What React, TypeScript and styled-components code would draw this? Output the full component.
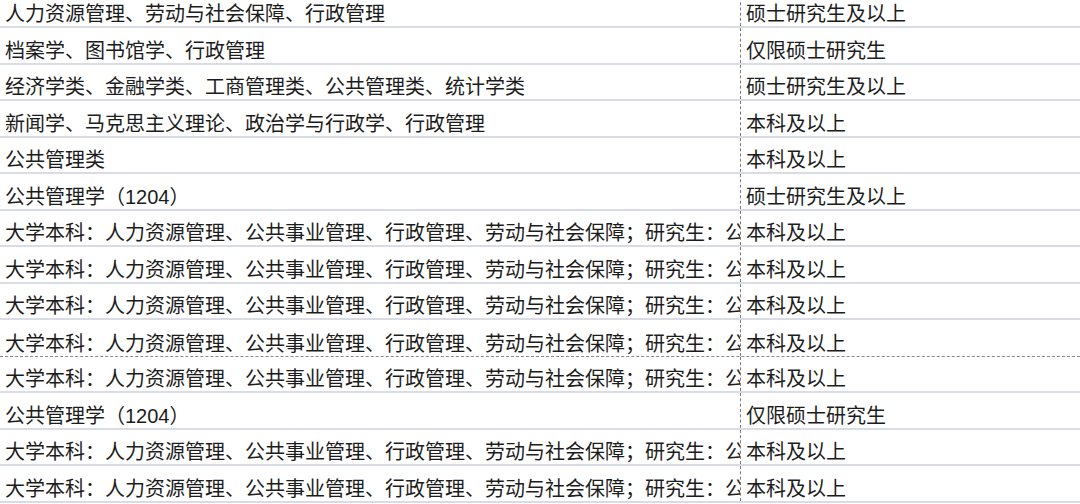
import styled, { createGlobalStyle } from 'styled-components';

const GlobalStyle = createGlobalStyle`
    html, body {
        margin: 0;
        padding: 0;
        background: #ffffff;
        overflow: hidden;
    }
`;

type Entry = {
    major: string;
    degree: string;
    pageBreak?: boolean;
};

// the long cells run past the column edge and get clipped, same as the sheet
const LONG_MAJOR =
    '大学本科：人力资源管理、公共事业管理、行政管理、劳动与社会保障；研究生：公共管理';

const entries: Entry[] = [
    { major: '人力资源管理、劳动与社会保障、行政管理', degree: '硕士研究生及以上' },
    { major: '档案学、图书馆学、行政管理', degree: '仅限硕士研究生' },
    {
        major: '经济学类、金融学类、工商管理类、公共管理类、统计学类',
        degree: '硕士研究生及以上',
    },
    { major: '新闻学、马克思主义理论、政治学与行政学、行政管理', degree: '本科及以上' },
    { major: '公共管理类', degree: '本科及以上' },
    { major: '公共管理学（1204）', degree: '硕士研究生及以上' },
    { major: LONG_MAJOR, degree: '本科及以上' },
    { major: LONG_MAJOR, degree: '本科及以上' },
    { major: LONG_MAJOR, degree: '本科及以上' },
    { major: LONG_MAJOR, degree: '本科及以上', pageBreak: true },
    { major: LONG_MAJOR, degree: '本科及以上' },
    { major: '公共管理学（1204）', degree: '仅限硕士研究生' },
    { major: LONG_MAJOR, degree: '本科及以上' },
    { major: LONG_MAJOR, degree: '本科及以上' },
];

const App = () => {
    return (
        <>
            <GlobalStyle />
            <Sheet>
                {entries.map((entry, index) => (
                    <Row key={index} $pageBreak={entry.pageBreak}>
                        <MajorCell>
                            <CellText>{entry.major}</CellText>
                        </MajorCell>
                        <DegreeCell>
                            <CellText>{entry.degree}</CellText>
                        </DegreeCell>
                    </Row>
                ))}
            </Sheet>
        </>
    );
};

const Sheet = styled.div`
    display: flex;
    flex-direction: column;
    margin-top: -8.5px;
    font-family: 'Liberation Sans', 'Noto Sans CJK SC', sans-serif;
    font-size: 20px;
    color: #1c1c1c;
`;

const Row = styled.div<{ $pageBreak?: boolean }>`
    display: grid;
    grid-template-columns: 741px 1fr;
    height: 36.5px;
    box-sizing: border-box;
    border-bottom: ${({ $pageBreak }) =>
        $pageBreak ? '1.5px dashed #8a8a8a' : '2px solid #d9dbe5'};
`;

const Cell = styled.div`
    display: flex;
    align-items: flex-end;
    padding-left: 5px;
    line-height: 24px;
    overflow: hidden;
`;

const MajorCell = styled(Cell)`
    border-right: 1px dashed #7a7a7a;
`;

const DegreeCell = styled(Cell)`
    padding-left: 5px;
`;

const CellText = styled.span`
    white-space: nowrap;
`;

export default App;
